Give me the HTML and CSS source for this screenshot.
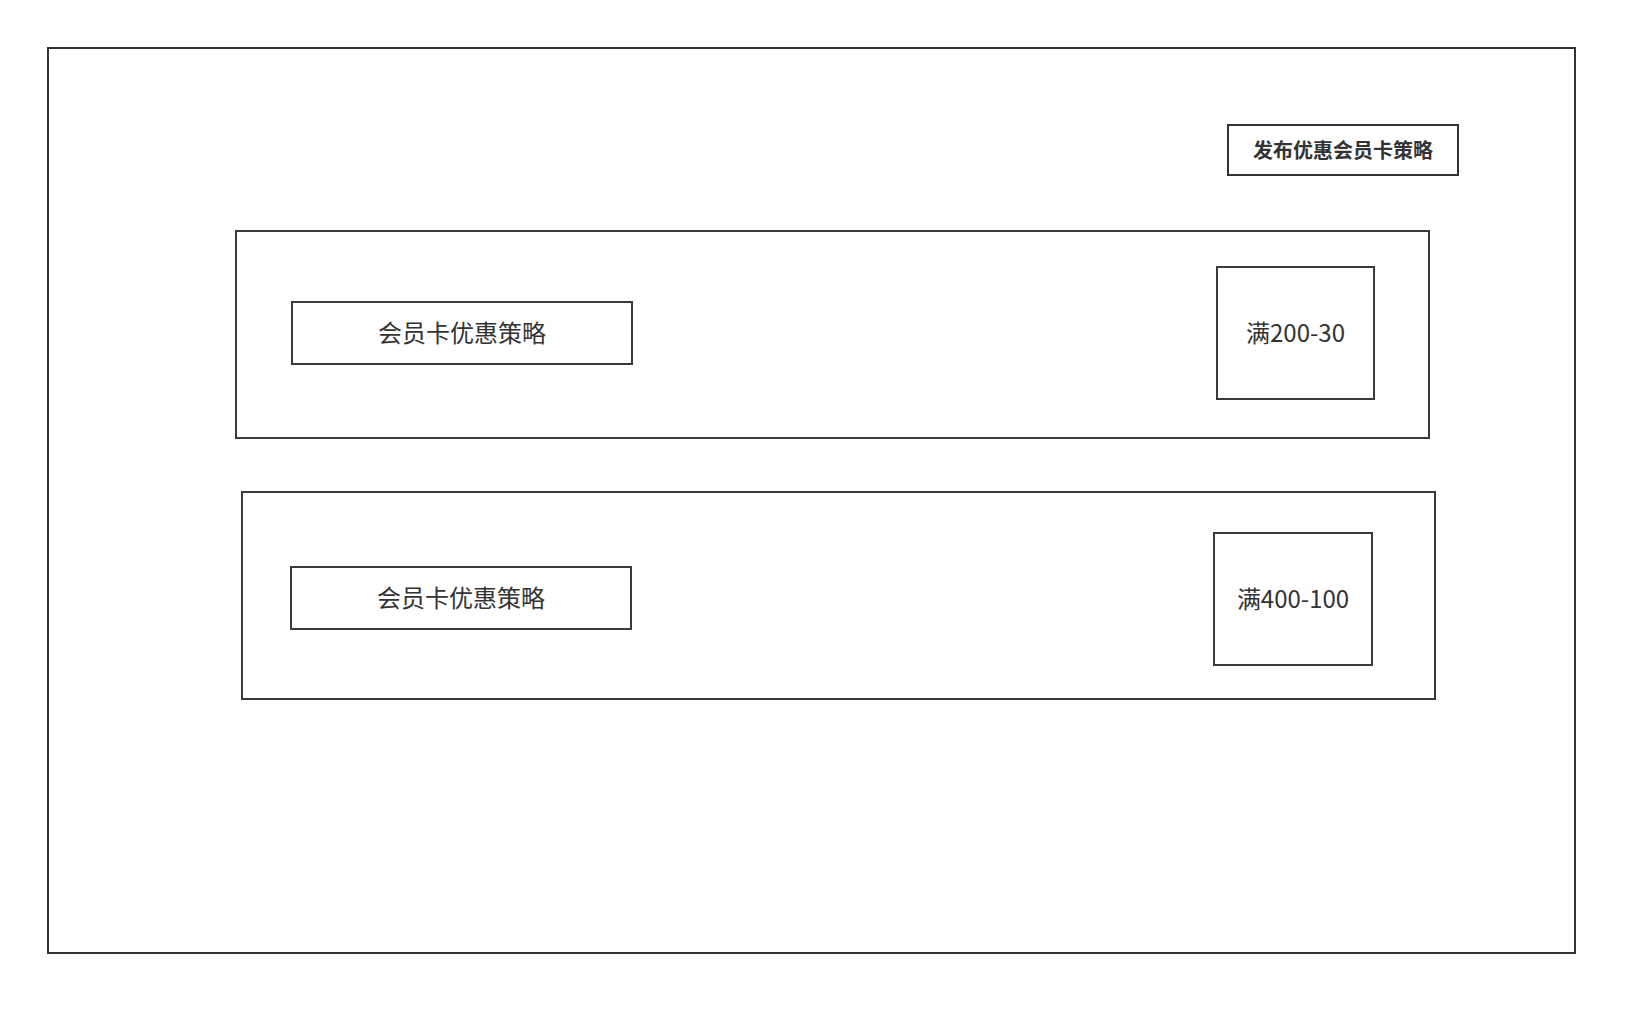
FILE: index.html
```html
<!DOCTYPE html>
<html lang="zh-CN">
<head>
    <meta charset="UTF-8">
    <meta name="viewport" content="width=device-width, initial-scale=1.0">
    <title>会员卡优惠策略</title>
    <link rel="stylesheet" href="styles.css">
</head>
<body>
    <div class="frame">
        <div class="toolbar">
            <div class="publish-btn">发布优惠会员卡策略</div>
        </div>
        <div class="card">
            <div class="strategy-name">会员卡优惠策略</div>
            <div class="strategy-value">满200-30</div>
        </div>
        <div class="card card-alt">
            <div class="strategy-name">会员卡优惠策略</div>
            <div class="strategy-value">满400-100</div>
        </div>
    </div>
</body>
</html>
```

FILE: styles.css
```css
* {
    box-sizing: border-box;
}
body {
    margin: 0;
    padding: 47px;
    background: #ffffff;
    font-family: "Noto Sans CJK SC", "Noto Sans", sans-serif;
    color: #333333;
}
.frame {
    width: 1529px;
    height: 907px;
    border: 2px solid #333333;
}
.toolbar {
    display: flex;
    justify-content: flex-end;
    padding: 75px 115px 0 0;
}
.publish-btn {
    width: 232px;
    height: 52px;
    padding-bottom: 2px;
    border: 2px solid #333333;
    display: flex;
    justify-content: center;
    align-items: center;
    font-size: 20px;
    font-weight: bold;
}
.card {
    width: 1195px;
    height: 209px;
    margin: 54px 0 0 186px;
    padding: 0 53px 0 54px;
    border: 2px solid #3a3a3a;
    display: flex;
    justify-content: space-between;
    align-items: center;
}
.card-alt {
    margin: 52px 0 0 192px;
    padding: 0 61px 0 47px;
}
.strategy-name {
    width: 342px;
    height: 64px;
    margin-top: -3px;
    padding-bottom: 3px;
    border: 2px solid #3a3a3a;
    display: flex;
    justify-content: center;
    align-items: center;
    font-size: 24px;
}
.card-alt .strategy-name {
    margin-top: 4px;
}
.strategy-value {
    width: 159px;
    height: 134px;
    margin-top: -3px;
    padding-bottom: 3px;
    border: 2px solid #3a3a3a;
    display: flex;
    justify-content: center;
    align-items: center;
    font-size: 24px;
}
.card-alt .strategy-value {
    width: 160px;
    margin-top: 6px;
}
```
